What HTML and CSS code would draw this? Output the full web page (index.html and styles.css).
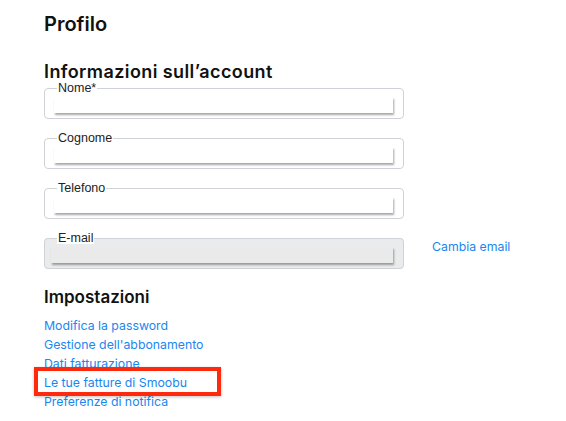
FILE: index.html
```html
<!DOCTYPE html>
<html lang="it">
<head>
<meta charset="utf-8">
<title>Profilo</title>
<link rel="stylesheet" href="styles.css">
</head>
<body>
<main class="page">
  <h1 class="title">Profilo</h1>
  <h2 class="section">Informazioni sull’account</h2>
  <div class="fields">
    <fieldset class="field">
      <legend class="label">Nome*</legend>
      <input class="input" type="text">
    </fieldset>
    <fieldset class="field">
      <legend class="label">Cognome</legend>
      <input class="input" type="text">
    </fieldset>
    <fieldset class="field">
      <legend class="label">Telefono</legend>
      <input class="input" type="text">
    </fieldset>
    <div class="email-row">
      <fieldset class="field field-disabled">
        <legend class="label label-bg">E-mail</legend>
        <input class="input input-disabled" type="text" disabled>
      </fieldset>
      <a class="link change" href="#">Cambia email</a>
    </div>
  </div>
  <h2 class="section settings">Impostazioni</h2>
  <ul class="links">
    <li><a class="link" href="#">Modifica la password</a></li>
    <li><a class="link" href="#">Gestione dell'abbonamento</a></li>
    <li><a class="link" href="#">Dati fatturazione</a></li>
    <li class="marked"><a class="link" href="#">Le tue fatture di Smoobu</a><span class="highlight"></span></li>
    <li><a class="link" href="#">Preferenze di notifica</a></li>
  </ul>
</main>
</body>
</html>
```
FILE: styles.css
```css
* { box-sizing: border-box; }
html, body { margin: 0; padding: 0; background: #fff; }
body { font-family: Inter, "Noto Sans", sans-serif; color: #111; }
.page { padding: 12px 0 0 44px; }
.title { margin: 0; font-size: 20px; line-height: 24px; font-weight: 600; color: #111; }
.section { margin: 26px 0 0; font-size: 18px; line-height: 20px; font-weight: 600; letter-spacing: 0.4px; color: #111; }
.fields { display: flex; flex-direction: column; gap: 13px; margin-top: 0; }
.field {
  margin: 0; width: 360px; height: 37px;
  border: 1px solid #cfd3d8; border-radius: 4px;
  padding: 0 10px 0 9px;
}
.label {
  font-family: "Liberation Sans", Arial, sans-serif;
  font-size: 12.5px; line-height: 12px; color: #222;
  padding: 0 1px; margin-left: 3px;
}
.input {
  display: block; width: 100%; height: 16px; margin-top: 3px;
  border: none; background: #fff; outline: none;
  box-shadow: 1px 2px 2px rgba(0,0,0,0.35);
}
.email-row { display: flex; align-items: center; gap: 28px; }
.field-disabled { background: #eaebec; padding-left: 6px; }
.label-bg { background: #fff; margin-left: 6px; }
.input-disabled { background: #eaeaea; }
.link { color: #1a86f0; text-decoration: none; font-size: 12.3px; line-height: 19px; }
.change { margin-top: -8px; }
.settings { margin-top: 18px; font-size: 17px; letter-spacing: 0; }
.links { list-style: none; margin: 8px 0 0; padding: 0; }
.links li { line-height: 19px; height: 19px; }
.marked { position: relative; }
.highlight {
  position: absolute; left: -10px; top: -5px; width: 187px; height: 29px;
  border: 4px solid #ff2a0d; box-shadow: 0 1px 3px rgba(0,0,0,0.25);
}
```
